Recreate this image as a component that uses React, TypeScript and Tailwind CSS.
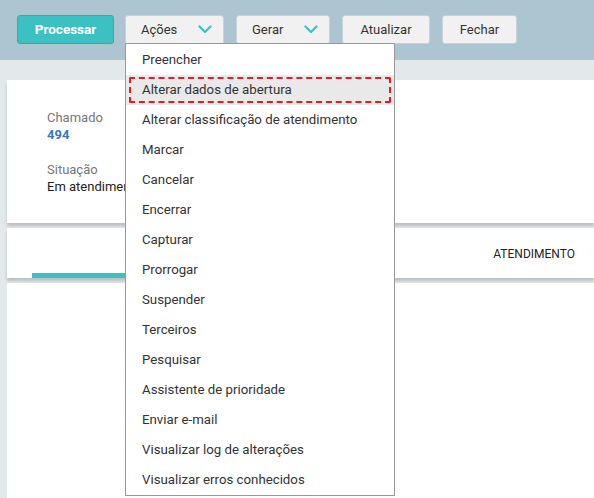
import React from "react";

const items = [
  "Preencher",
  "Alterar dados de abertura",
  "Alterar classificação de atendimento",
  "Marcar",
  "Cancelar",
  "Encerrar",
  "Capturar",
  "Prorrogar",
  "Suspender",
  "Terceiros",
  "Pesquisar",
  "Assistente de prioridade",
  "Enviar e-mail",
  "Visualizar log de alterações",
  "Visualizar erros conhecidos",
];

function Chevron() {
  return (
    <svg width="14" height="9" viewBox="0 0 14 9" fill="none">
      <path d="M1.5 1.5L7 7L12.5 1.5" stroke="#3cc1c3" strokeWidth="2.2" strokeLinecap="round" strokeLinejoin="round" />
    </svg>
  );
}

export default function App() {
  return (
    <div className="w-[594px] h-[498px] overflow-hidden bg-[#e3e8eb] relative" style={{ fontFamily: "Roboto, 'Liberation Sans', sans-serif" }}>
      {/* toolbar */}
      <div className="h-[60px] bg-[#adc4d1] flex items-start pt-[15px] pl-[17px]">
        <button className="w-[97px] h-[29px] rounded-[3px] bg-[#3cc1c3] border border-[#35a9ab] text-white font-bold text-[13.5px] flex items-center justify-center">
          Processar
        </button>
        <button className="ml-[11px] w-[99px] h-[28px] rounded-t-[3px] bg-[#f1f1f1] border border-[#c9d2d8] border-b-0 text-[#333] text-[13px] flex items-center justify-between pl-[15px] pr-[11px]">
          <span>Ações</span>
          <Chevron />
        </button>
        <button className="ml-[12px] w-[94px] h-[29px] rounded-[3px] bg-[#f1f1f1] border border-[#c9d2d8] text-[#333] text-[13px] flex items-center justify-between pl-[15px] pr-[11px]">
          <span>Gerar</span>
          <Chevron />
        </button>
        <button className="ml-[12px] w-[88px] h-[29px] rounded-[3px] bg-[#f1f1f1] border border-[#c9d2d8] text-[#333] text-[13px] flex items-center justify-center">
          Atualizar
        </button>
        <button className="ml-[12px] w-[75px] h-[29px] rounded-[3px] bg-[#f1f1f1] border border-[#c9d2d8] text-[#333] text-[13px] flex items-center justify-center">
          Fechar
        </button>
      </div>

      {/* content */}
      <div className="pl-[7px] pt-[20px] flex flex-col gap-[5px]">
        <div className="h-[143px] bg-white shadow-[0_3px_3px_rgba(0,0,0,0.18)] pl-[40px] pt-[30px]">
          <div className="text-[13px] text-[#777] leading-[16px]">Chamado</div>
          <div className="text-[13px] text-[#3a78bd] font-bold leading-[18px]">494</div>
          <div className="text-[13px] text-[#777] leading-[16px] mt-[18px]">Situação</div>
          <div className="text-[13px] text-[#222] leading-[18px]">Em atendimento</div>
        </div>
        <div className="h-[50px] bg-white shadow-[0_3px_3px_rgba(0,0,0,0.18)] flex items-end relative">
          <div className="ml-[25px] w-[120px] h-[5px] bg-[#3cc1c3]" />
          <div className="absolute right-[19px] top-[17px] text-[12px] text-[#222]">ATENDIMENTO</div>
        </div>
        <div className="h-[230px] bg-white" />
      </div>

      {/* dropdown menu */}
      <div className="absolute left-[125px] top-[43px] w-[270px] bg-white border border-[#999] pt-[1px]">
        {items.map((it, i) => (
          <div
            key={it}
            className={
              i === 1
                ? "h-[30px] bg-[#e9e9e9] flex items-center px-[3px]"
                : "h-[30px] flex items-center pl-[16px] text-[13.25px] text-[#333]"
            }
          >
            {i === 1 ? (
              <div className="w-full h-[26px] border-2 border-dashed border-[#e31b23] rounded-[2px] flex items-center pl-[11px] text-[13.25px] text-[#333]">
                {it}
              </div>
            ) : (
              it
            )}
          </div>
        ))}
      </div>
    </div>
  );
}
